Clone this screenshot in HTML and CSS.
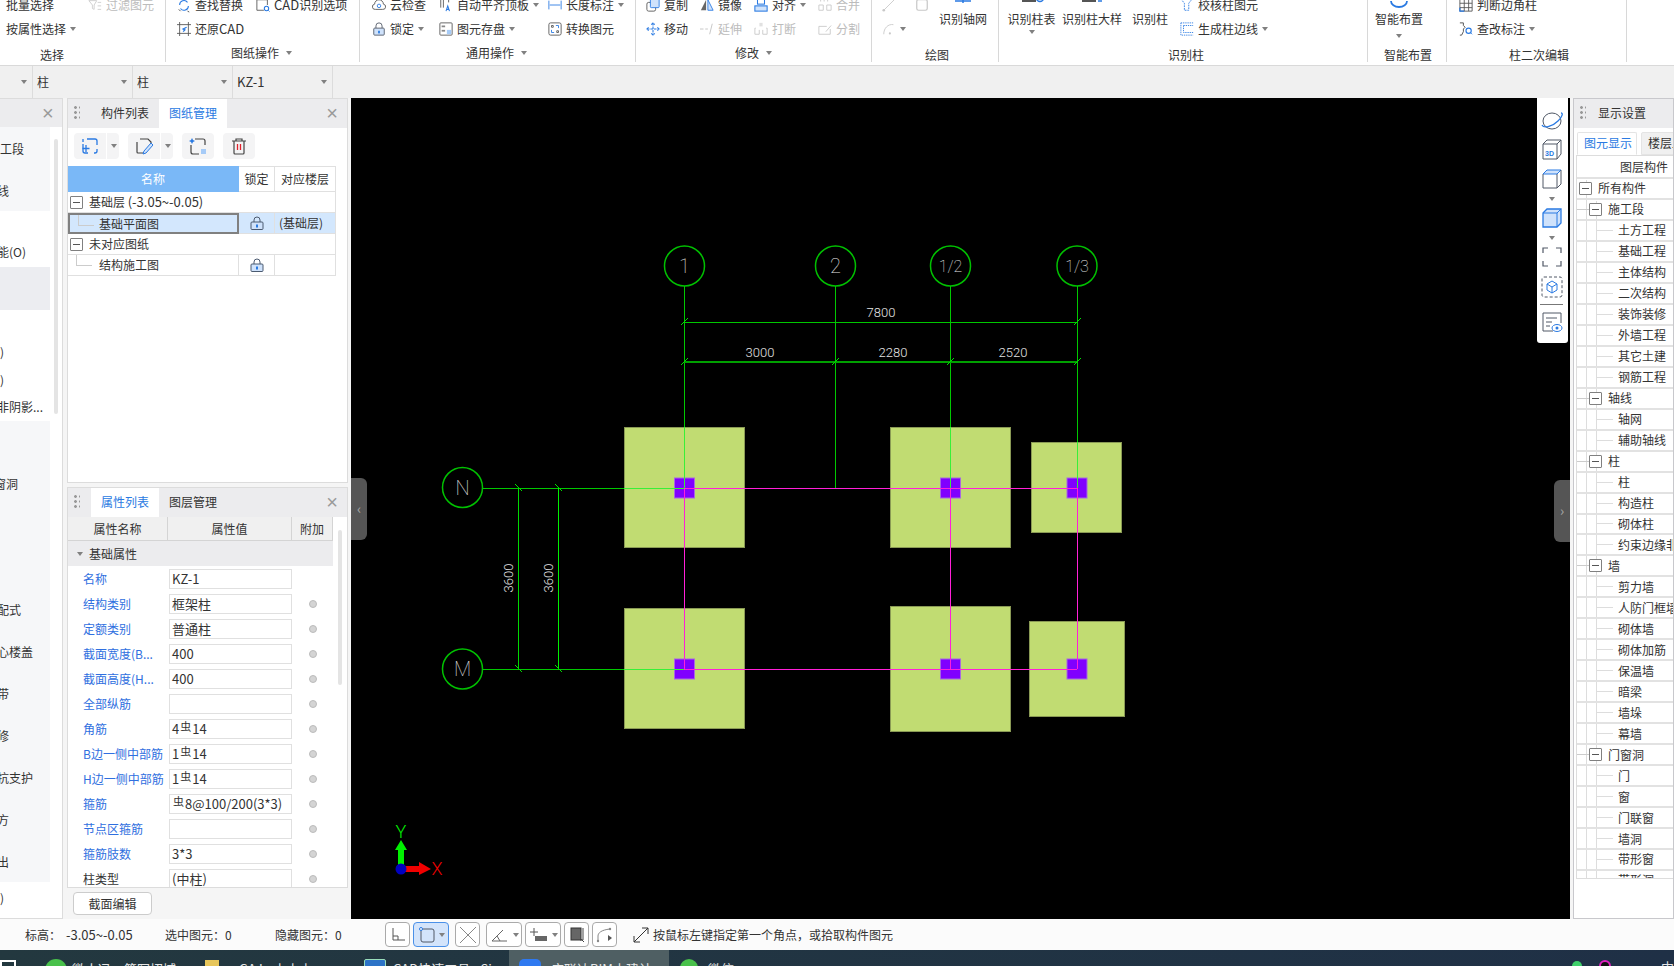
FILE: index.html
```html
<!DOCTYPE html>
<html lang="zh">
<head>
<meta charset="utf-8">
<title>GTJ</title>
<link rel="stylesheet" href="styles.css">
</head>
<body>
<svg class="defs" width="0" height="0">
  <symbol id="i-batch" viewBox="0 0 16 16"><path d="M8 3v10M4 8h8" fill="none" stroke="#2a7ae2" stroke-width="1.3"/></symbol>
  <symbol id="i-filter" viewBox="0 0 16 16"><path d="M1 3h9L7 8v5L5 12V8zM11 5h4M11 9h4M11 13h4" fill="none" stroke="#ccc"/></symbol>
  <symbol id="i-find" viewBox="0 0 16 16"><path d="M3 8a5 5 0 0 1 9-3M13 9a5 5 0 0 1-9 3" fill="none" stroke="#2a7ae2" stroke-width="1.2"/><path d="M12 15l2 1M2 13l2 2" stroke="#444"/></symbol>
  <symbol id="i-cadopt" viewBox="0 0 16 16"><path d="M1 2h12v6M1 2v12h8" fill="none" stroke="#555"/><circle cx="12" cy="12" r="2.5" fill="none" stroke="#2a7ae2" stroke-width="1.2"/><path d="M14 14l1.5 1.5" stroke="#2a7ae2"/></symbol>
  <symbol id="i-restore" viewBox="0 0 16 16"><path d="M0 3h16M0 13h16M3 0v16M13 0v16" stroke="#555" fill="none"/><path d="M11 6L7 8l2 1-2 2" stroke="#2a7ae2" stroke-width="1.5" fill="none"/></symbol>
  <symbol id="i-cloud" viewBox="0 0 16 16"><path d="M4 13a3 3 0 0 1-1-6 5 5 0 0 1 10 0 3 3 0 0 1-1 6z" fill="none" stroke="#555"/><circle cx="8" cy="9" r="2" fill="none" stroke="#2a7ae2"/></symbol>
  <symbol id="i-lock" viewBox="0 0 16 16"><path d="M4.500 7V4.500a3.500 3.500 0 0 1 7 0V7" fill="none" stroke="#505866"/><rect x="2" y="7" width="12" height="8" rx="1" fill="#cfe2fb" stroke="#505866"/><rect x="7" y="10" width="2" height="3" fill="#2a7ae2"/></symbol>
  <symbol id="i-autoalign" viewBox="0 0 16 16"><path d="M2 1v10M5 1v10M11 1v4" stroke="#555" fill="none"/><path d="M8 15l2-6 2 6M9 13h2" stroke="#2a7ae2" fill="none" stroke-width="1.2"/></symbol>
  <symbol id="i-save" viewBox="0 0 16 16"><rect x="1" y="1" width="14" height="14" rx="1" fill="none" stroke="#555"/><rect x="3" y="4" width="4" height="2" fill="#888"/><rect x="3" y="9" width="4" height="2" fill="#888"/><rect x="9" y="9" width="5" height="5" fill="#a6cbf7"/></symbol>
  <symbol id="i-length" viewBox="0 0 16 16"><path d="M1 3v10M15 3v10M2 8h12" stroke="#2a7ae2" fill="none"/></symbol>
  <symbol id="i-convert" viewBox="0 0 16 16"><rect x="1" y="1" width="14" height="14" rx="2" fill="none" stroke="#555"/><path d="M9 4h3v3M4 9v3h3" stroke="#2a7ae2" fill="none"/><path d="M4 4h2v2H4zM10 10h2v2h-2z" stroke="#555" fill="none"/></symbol>
  <symbol id="i-copy" viewBox="0 0 16 16"><rect x="1" y="5" width="10" height="10" rx="2" fill="#fff" stroke="#555"/><rect x="5" y="1" width="10" height="10" rx="1" fill="#cfe2fb" stroke="#2a7ae2"/></symbol>
  <symbol id="i-mirror" viewBox="0 0 16 16"><path d="M7 2L1 14h6z" fill="#666"/><path d="M9 2l6 12H9z" fill="#cfe2fb" stroke="#2a7ae2"/></symbol>
  <symbol id="i-align" viewBox="0 0 16 16"><rect x="4" y="1" width="8" height="6" fill="#fff" stroke="#2a7ae2" stroke-width="1.2"/><rect x="1" y="9" width="14" height="6" fill="#cfe2fb" stroke="#2a7ae2" stroke-width="1.2"/></symbol>
  <symbol id="i-merge" viewBox="0 0 16 16"><path d="M3 1v3M7 1v3M11 1v3M1 8h5v6H1zM10 8h5v6h-5z" fill="none" stroke="#c8c8c8"/></symbol>
  <symbol id="i-move" viewBox="0 0 16 16"><path d="M8 1v14M1 8h14M6 3l2-2 2 2M6 13l2 2 2-2M3 6L1 8l2 2M13 6l2 2-2 2" fill="none" stroke="#2a7ae2" stroke-width="1.2" stroke-dasharray="3 1"/></symbol>
  <symbol id="i-extend" viewBox="0 0 16 16"><path d="M0 8h4M6 8h3M14 2l-3 12" fill="none" stroke="#c0c0c0"/></symbol>
  <symbol id="i-break" viewBox="0 0 16 16"><path d="M7 1v4M2 7H1v7h5V9M10 9v5h5V7h-1M9 1v4" fill="none" stroke="#c8c8c8"/></symbol>
  <symbol id="i-split" viewBox="0 0 16 16"><path d="M1 5h9M1 5v9h13V8M9 11l6-7" fill="none" stroke="#c8c8c8"/></symbol>
  <symbol id="i-line" viewBox="0 0 16 16"><path d="M2 14L14 2" stroke="#c8c8c8"/><circle cx="2" cy="14" r="1.500" fill="#c8c8c8"/></symbol>
  <symbol id="i-rect" viewBox="0 0 16 16"><rect x="2" y="2" width="12" height="12" rx="2" fill="none" stroke="#c8c8c8" stroke-width="1.4"/></symbol>
  <symbol id="i-arc" viewBox="0 0 16 16"><path d="M2 14C2 7 7 2 13 3" fill="none" stroke="#c8c8c8"/><circle cx="9" cy="13" r="1.200" fill="#c8c8c8"/></symbol>
  <symbol id="i-verify" viewBox="0 0 16 16"><path d="M1 1h13l-4 5v8H5V6z" fill="none" stroke="#2a7ae2" stroke-dasharray="2 1"/></symbol>
  <symbol id="i-edge" viewBox="0 0 16 16"><path d="M1 1h14M1 1v14h14M4 4h11M4 4v8h11" fill="none" stroke="#2a7ae2" stroke-dasharray="1.500 1"/></symbol>
  <symbol id="i-judge" viewBox="0 0 16 16"><path d="M1 1h14v14H1zM1 6h14M1 11h14M6 1v14M11 1v14" fill="none" stroke="#555"/><path d="M1 11v4h5" fill="none" stroke="#2a7ae2" stroke-width="1.4"/></symbol>
  <symbol id="i-mark" viewBox="0 0 16 16"><path d="M1 1h4v3l2 2-2 2v3l-2 4H1" fill="none" stroke="#444"/><circle cx="11" cy="10" r="3" fill="none" stroke="#2a7ae2" stroke-width="1.3"/><path d="M13 12l2 2" stroke="#2a7ae2"/></symbol>
  <symbol id="i-padlock" viewBox="0 0 14 14"><path d="M4 6V4a3 3 0 0 1 6 0v2" fill="none" stroke="#4b5a70"/><rect x="1" y="6" width="12" height="7.500" rx="1" fill="#cfe2fb" stroke="#4b5a70"/><rect x="6" y="8.500" width="2" height="3" fill="#2a7ae2"/></symbol>
</svg>

<header class="ribbon">
  <section class="group g1">
    <div class="gbody b1">
      <div class="col c1a">
        <div class="it"><svg class="ic"><use href="#i-batch"/></svg>批量选择</div>
        <div class="it"><svg class="ic"><use href="#i-batch"/></svg>按属性选择<i class="dd"></i></div>
      </div>
      <div class="col">
        <div class="it off"><svg class="ic"><use href="#i-filter"/></svg>过滤图元</div>
      </div>
    </div>
    <div class="glabel gl1">选择</div>
  </section>
  <section class="group g2">
    <div class="gbody b2">
      <div class="col c2a">
        <div class="it"><svg class="ic"><use href="#i-find"/></svg>查找替换</div>
        <div class="it"><svg class="ic"><use href="#i-restore"/></svg><span>还原<span class="lat">CAD</span></span></div>
      </div>
      <div class="col">
        <div class="it"><svg class="ic"><use href="#i-cadopt"/></svg><span><span class="lat">CAD</span>识别选项</span></div>
      </div>
    </div>
    <div class="glabel up gl2">图纸操作<i class="dd dd-l"></i></div>
  </section>
  <section class="group g3">
    <div class="gbody b3">
      <div class="col c3a">
        <div class="it"><svg class="ic"><use href="#i-cloud"/></svg>云检查</div>
        <div class="it"><svg class="ic"><use href="#i-lock"/></svg>锁定<i class="dd"></i></div>
      </div>
      <div class="col c3b">
        <div class="it"><svg class="ic"><use href="#i-autoalign"/></svg>自动平齐顶板<i class="dd"></i></div>
        <div class="it"><svg class="ic"><use href="#i-save"/></svg>图元存盘<i class="dd"></i></div>
      </div>
      <div class="col">
        <div class="it"><svg class="ic"><use href="#i-length"/></svg>长度标注<i class="dd"></i></div>
        <div class="it"><svg class="ic"><use href="#i-convert"/></svg>转换图元</div>
      </div>
    </div>
    <div class="glabel up gl3">通用操作<i class="dd dd-l"></i></div>
  </section>
  <section class="group g4">
    <div class="gbody b4">
      <div class="col c4a">
        <div class="it"><svg class="ic"><use href="#i-copy"/></svg>复制</div>
        <div class="it"><svg class="ic"><use href="#i-move"/></svg>移动</div>
      </div>
      <div class="col c4a">
        <div class="it"><svg class="ic"><use href="#i-mirror"/></svg>镜像</div>
        <div class="it off"><svg class="ic"><use href="#i-extend"/></svg>延伸</div>
      </div>
      <div class="col c4b">
        <div class="it"><svg class="ic"><use href="#i-align"/></svg>对齐<i class="dd"></i></div>
        <div class="it off"><svg class="ic"><use href="#i-break"/></svg>打断</div>
      </div>
      <div class="col">
        <div class="it off"><svg class="ic"><use href="#i-merge"/></svg>合并</div>
        <div class="it off"><svg class="ic"><use href="#i-split"/></svg>分割</div>
      </div>
    </div>
    <div class="glabel up gl4">修改<i class="dd dd-l"></i></div>
  </section>
  <section class="group g5">
    <div class="gbody b5">
      <div class="col c5a">
        <div class="it"><svg class="ic"><use href="#i-line"/></svg></div>
        <div class="it"><svg class="ic"><use href="#i-arc"/></svg><i class="dd dd-near"></i></div>
      </div>
      <div class="col c5b">
        <div class="it"><svg class="ic"><use href="#i-rect"/></svg></div>
      </div>
      <div class="lg">
        <svg class="lg-ic" viewBox="0 0 24 16"><path d="M4 8h16M12 0v10" stroke="#2a7ae2" stroke-width="1.500"/></svg>
        <span>识别轴网</span>
      </div>
    </div>
    <div class="glabel gl5">绘图</div>
  </section>
  <section class="group g6">
    <div class="gbody b6">
      <div class="lg c6a">
        <svg class="lg-ic" viewBox="0 0 24 16"><rect x="2" y="0" width="14" height="9" fill="#555"/><circle cx="20" cy="5" r="3.500" fill="none" stroke="#2a7ae2" stroke-width="1.500"/></svg>
        <span>识别柱表</span><i class="dd dd-c"></i>
      </div>
      <div class="lg c6b">
        <svg class="lg-ic" viewBox="0 0 24 16"><rect x="2" y="0" width="14" height="9" fill="#555"/><path d="M18 8h4" stroke="#2a7ae2" stroke-width="1.500"/></svg>
        <span>识别柱大样</span>
      </div>
      <div class="lg c6c">
        <svg class="lg-ic" viewBox="0 0 24 16"><rect x="6" y="0" width="10" height="8" fill="#fff"/></svg>
        <span>识别柱</span>
      </div>
      <div class="col">
        <div class="it"><svg class="ic"><use href="#i-verify"/></svg>校核柱图元</div>
        <div class="it"><svg class="ic"><use href="#i-edge"/></svg>生成柱边线<i class="dd"></i></div>
      </div>
    </div>
    <div class="glabel gl6">识别柱</div>
  </section>
  <section class="group g7">
    <div class="gbody b7">
      <div class="lg">
        <svg class="lg-ic" viewBox="0 0 24 16"><path d="M4 8a8 6 0 0 0 16 0" fill="none" stroke="#2a7ae2" stroke-width="1.800"/></svg>
        <span>智能布置</span><i class="dd dd-c dd-low"></i>
      </div>
    </div>
    <div class="glabel gl7">智能布置</div>
  </section>
  <section class="group g8">
    <div class="gbody b8">
      <div class="col">
        <div class="it"><svg class="ic"><use href="#i-judge"/></svg>判断边角柱</div>
        <div class="it"><svg class="ic"><use href="#i-mark"/></svg>查改标注<i class="dd"></i></div>
      </div>
    </div>
    <div class="glabel gl8">柱二次编辑</div>
  </section>
</header>

<nav class="combos">
  <div class="combo first"><i class="dd"></i></div>
  <div class="combo">柱<i class="dd"></i></div>
  <div class="combo">柱<i class="dd"></i></div>
  <div class="combo"><span class="lat">KZ-1</span><i class="dd"></i></div>
</nav>

<main class="main">
  <aside class="nav-panel">
    <div class="phead close-only"><span class="x">×</span></div>
    <div class="nav-body">
      <div class="nav-list">
        <div class="nl tint h43">工段</div>
        <div class="nl tint h41 cut">线</div>
        <div class="nl h26"></div>
        <div class="nl h30 cut">能(O)</div>
        <div class="nl sel h43"></div>
        <div class="nl h28"></div>
        <div class="nl h28">)</div>
        <div class="nl h27">)</div>
        <div class="nl h28 cut">非阴影...</div>
        <div class="nl tint h42"></div>
        <div class="nl tint h42 cut2">窗洞</div>
        <div class="nl tint h42"></div>
        <div class="nl tint h42"></div>
        <div class="nl tint h42 cut">配式</div>
        <div class="nl tint h42 cut">心楼盖</div>
        <div class="nl tint h42 cut">带</div>
        <div class="nl tint h42 cut">修</div>
        <div class="nl tint h42 cut">抗支护</div>
        <div class="nl tint h42 cut">方</div>
        <div class="nl tint h41 cut">出</div>
        <div class="nl h32">)</div>
      </div>
      <div class="vscroll"></div>
    </div>
  </aside>

  <div class="mid">
    <section class="panel p-top">
      <div class="phead">
        <span class="grip"></span>
        <span class="tab">构件列表</span>
        <span class="tab on">图纸管理</span>
        <span class="x x-r">×</span>
      </div>
      <div class="dtools">
        <div class="tbtn split">
          <svg width="18" height="18" viewBox="0 0 18 18"><path d="M6 2h8a2 2 0 0 1 2 2v4M2 7v7a2 2 0 0 0 2 2h3M16 12v2a2 2 0 0 1-2 2h-1" fill="none" stroke="#2a7ae2" stroke-width="1.300"/><path d="M2 2v3M5 8v7M1.500 11.500h7" stroke="#2a7ae2" stroke-width="1.300"/></svg>
          <i class="sep"></i><i class="dd"></i>
        </div>
        <div class="tbtn split">
          <svg width="18" height="18" viewBox="0 0 18 18"><path d="M5 2h8l3 3v3M2 5v10a1 1 0 0 0 1 1h5" fill="none" stroke="#444" stroke-width="1.200"/><path d="M9 14l7-8 2 2-7 8-3 1z" fill="#cfe2fb" stroke="#2a7ae2"/></svg>
          <i class="sep"></i><i class="dd"></i>
        </div>
        <div class="tbtn">
          <svg width="18" height="18" viewBox="0 0 18 18"><path d="M6 2h8a2 2 0 0 1 2 2v4M2 8v7a2 2 0 0 0 2 2h6" fill="none" stroke="#444" stroke-width="1.200"/><path d="M3 1l1 2 2 1-2 1-1 2-1-2-2-1 2-1z" fill="#2a7ae2"/><rect x="12" y="12" width="5" height="5" fill="#a6cbf7"/></svg>
        </div>
        <div class="tbtn">
          <svg width="16" height="18" viewBox="0 0 16 18"><path d="M1 4h14M5 4V2h6v2M3 4v12a1 1 0 0 0 1 1h8a1 1 0 0 0 1-1V4" fill="none" stroke="#444" stroke-width="1.200"/><path d="M6.500 7v6M9.500 7v6" stroke="#e0212c" stroke-width="1.300"/></svg>
        </div>
      </div>
      <div class="dwg">
        <div class="dh dh-name">名称</div><div class="dh">锁定</div><div class="dh">对应楼层</div>
        <div class="dr span"><i class="box"></i><span>基础层 <span class="lat">(-3.05~-0.05)</span></span></div>
        <div class="dc active child">基础平面图</div><div class="dc picked"><svg class="pad"><use href="#i-padlock"/></svg></div><div class="dc picked left">(基础层)</div>
        <div class="dr span"><i class="box"></i>未对应图纸</div>
        <div class="dc child">结构施工图</div><div class="dc"><svg class="pad"><use href="#i-padlock"/></svg></div><div class="dc"></div>
      </div>
    </section>
    <section class="panel p-prop">
      <div class="phead">
        <span class="grip"></span>
        <span class="tab on">属性列表</span>
        <span class="tab">图层管理</span>
        <span class="x x-r">×</span>
      </div>
      <div class="prop-wrap">
        <div class="prop">
          <div class="ph">属性名称</div><div class="ph">属性值</div><div class="ph">附加</div>
          <div class="pg"><i class="dd"></i>基础属性</div>
          <div class="pl">名称</div><div class="pv">KZ-1</div><div class="pc"></div>
          <div class="pl">结构类别</div><div class="pv">框架柱</div><div class="pc"><i class="dot"></i></div>
          <div class="pl">定额类别</div><div class="pv">普通柱</div><div class="pc"><i class="dot"></i></div>
          <div class="pl">截面宽度(B...</div><div class="pv">400</div><div class="pc"><i class="dot"></i></div>
          <div class="pl">截面高度(H...</div><div class="pv">400</div><div class="pc"><i class="dot"></i></div>
          <div class="pl">全部纵筋</div><div class="pv"></div><div class="pc"><i class="dot"></i></div>
          <div class="pl">角筋</div><div class="pv">4<span class="rb">虫</span>14</div><div class="pc"><i class="dot"></i></div>
          <div class="pl">B边一侧中部筋</div><div class="pv">1<span class="rb">虫</span>14</div><div class="pc"><i class="dot"></i></div>
          <div class="pl">H边一侧中部筋</div><div class="pv">1<span class="rb">虫</span>14</div><div class="pc"><i class="dot"></i></div>
          <div class="pl">箍筋</div><div class="pv"><span class="rb">虫</span>8@100/200(3*3)</div><div class="pc"><i class="dot"></i></div>
          <div class="pl">节点区箍筋</div><div class="pv"></div><div class="pc"><i class="dot"></i></div>
          <div class="pl">箍筋肢数</div><div class="pv">3*3</div><div class="pc"><i class="dot"></i></div>
          <div class="pl dark">柱类型</div><div class="pv">(中柱)</div><div class="pc"><i class="dot"></i></div>
        </div>
        <div class="vscroll prop-scroll"></div>
      </div>
    </section>
    <div class="btn-row"><button class="btn">截面编辑</button></div>
  </div>

  <div class="canvas">
    <svg class="cad" width="1219" height="821" viewBox="351 98 1219 821">
      <g fill="#c1dc72" stroke="#8a9a55">
        <rect x="624.500" y="427.500" width="120" height="120"/>
        <rect x="624.500" y="608.500" width="120" height="120"/>
        <rect x="890.500" y="427.500" width="120" height="120"/>
        <rect x="890.500" y="606.500" width="120" height="125"/>
        <rect x="1031.500" y="442.500" width="90" height="90"/>
        <rect x="1029.500" y="621.500" width="95" height="95"/>
      </g>
      <g fill="#8000ff" stroke="#a868e0">
        <rect x="674.500" y="478" width="20" height="20"/>
        <rect x="940.500" y="478" width="20" height="20"/>
        <rect x="1067" y="478" width="20" height="20"/>
        <rect x="674.500" y="659" width="20" height="20"/>
        <rect x="940.500" y="659" width="20" height="20"/>
        <rect x="1067" y="659" width="20" height="20"/>
      </g>
      <g fill="none" stroke="#00c000" stroke-width="1.500">
        <circle cx="684.500" cy="266" r="20"/>
        <circle cx="835.500" cy="266" r="20"/>
        <circle cx="950.500" cy="266" r="20"/>
        <circle cx="1077" cy="266" r="20"/>
        <circle cx="462.500" cy="487.500" r="20"/>
        <circle cx="462.500" cy="669" r="20"/>
      </g>
      <g class="crisp" stroke="#00c800">
        <path d="M835.500 286V488"/>
        <path d="M684.500 286V427M950.500 286V427M1077 286V442"/>
        <path d="M684 322H1077"/>
        <path d="M684 362H1077" stroke-width="2" stroke="#00a000"/>
        <path d="M483 488H624M483 669H624"/>
        <path d="M518.500 488V669" stroke="#00d800"/>
        <path d="M558.500 488V669" stroke="#00f000"/>
      </g>
      <g stroke="#00e000">
        <path d="M681 325l7-7M1074 325l7-7M681 365l7-7M832 365l7-7M947 365l7-7M1074 365l7-7"/>
        <path d="M515 484l7 7M555 484l7 7M515 665l7 7M555 665l7 7"/>
      </g>
      <g class="crisp" stroke="#ff20d8">
        <path d="M684 488H1077M684.500 488V669M950.500 488V669M1077 488V669M684 669H1077"/>
      </g>
      <g class="crisp" stroke="#38f038">
        <path d="M684.500 427V488M950.500 427V488M1077 442V488M624 488H684M624 669H684"/>
      </g>
      <g class="cad-t">
        <text x="684.500" y="273" text-anchor="middle" class="t-big">1</text>
        <text x="835.500" y="273" text-anchor="middle" class="t-big">2</text>
        <text x="950.500" y="272" text-anchor="middle" class="t-mid">1/2</text>
        <text x="1077" y="272" text-anchor="middle" class="t-mid">1/3</text>
        <text x="462.500" y="495" text-anchor="middle" class="t-big">N</text>
        <text x="462.500" y="676" text-anchor="middle" class="t-big">M</text>
        <text x="881" y="317" text-anchor="middle">7800</text>
        <text x="760" y="357" text-anchor="middle">3000</text>
        <text x="893" y="357" text-anchor="middle">2280</text>
        <text x="1013" y="357" text-anchor="middle">2520</text>
        <text transform="translate(513 578) rotate(-90)" text-anchor="middle">3600</text>
        <text transform="translate(553 578) rotate(-90)" text-anchor="middle">3600</text>
      </g>
      <path d="M398 869V850H395L401 840L407 850H404V869z" fill="#00f000"/>
      <path d="M401 866H419V862L431 869L419 875V872H401z" fill="#f00000"/>
      <circle cx="401" cy="869" r="5.500" fill="#0000c0"/>
      <text x="401" y="838" text-anchor="middle" class="t-axis t-y">Y</text>
      <text x="437" y="875" text-anchor="middle" class="t-axis t-x">X</text>
    </svg>
    <div class="handle h-left">‹</div>
    <div class="handle h-right">›</div>
    <div class="float-bar">
      <svg width="22" height="22" viewBox="0 0 22 22"><ellipse cx="11" cy="11" rx="9" ry="8" fill="none" stroke="#505866"/><path d="M1 15C3 19 12 16 17 11s5-8 3-8" fill="none" stroke="#2a7ae2" stroke-width="1.300"/></svg>
      <svg width="22" height="24" viewBox="0 0 22 24"><path d="M2 6l4-4h14v14l-4 5H2zM2 6h14v15M16 6l4-4" fill="none" stroke="#505866"/><text x="4" y="18" class="t-3d">3D</text></svg>
      <svg width="22" height="22" viewBox="0 0 22 22"><path d="M2 6l4-4h14l-4 4z" fill="#cfe2fb" stroke="#2a7ae2"/><path d="M2 6v14h14V6M16 20l4-4V2" fill="none" stroke="#505866"/></svg>
      <i class="dd"></i>
      <svg width="22" height="22" viewBox="0 0 22 22"><path d="M2 6l4-4h14v14l-4 4H2z" fill="#cfe2fb" stroke="#2a7ae2" stroke-width="1.300"/><path d="M2 6h14v14M16 6l4-4" fill="none" stroke="#2a7ae2"/></svg>
      <i class="dd"></i>
      <svg width="22" height="22" viewBox="0 0 22 22"><path d="M2 7V2h5M15 2h5v5M20 15v5h-5M7 20H2v-5" fill="none" stroke="#505866" stroke-width="1.200"/></svg>
      <svg class="fb-d" width="22" height="22" viewBox="0 0 22 22"><rect x="1" y="1" width="20" height="20" rx="2" fill="none" stroke="#505866" stroke-dasharray="3 2"/><path d="M11 5l5 3v6l-5 3-5-3V8zM6 8l5 3 5-3M11 11v6" fill="none" stroke="#2a7ae2"/></svg>
      <i class="rule"></i>
      <svg width="22" height="22" viewBox="0 0 22 22"><path d="M20 12V2H2v18h10" fill="none" stroke="#505866"/><path d="M5 7h11M5 11h6M5 15h4" stroke="#505866"/><ellipse cx="16" cy="17" rx="5" ry="3.500" fill="#fff" stroke="#2a7ae2"/><circle cx="16" cy="17" r="1.500" fill="#2a7ae2"/></svg>
    </div>
  </div>

  <aside class="panel right">
    <div class="phead"><span class="grip"></span><span class="rtitle">显示设置</span></div>
    <div class="rtabs"><span class="rtab on">图元显示</span><span class="rtab">楼层显示</span></div>
    <div class="tree">
      <div class="tr thead">图层构件</div>
      <div class="tr l0"><i class="box"></i>所有构件</div>
      <div class="tr l1"><i class="box"></i>施工段</div>
      <div class="tr l2">土方工程</div>
      <div class="tr l2">基础工程</div>
      <div class="tr l2">主体结构</div>
      <div class="tr l2">二次结构</div>
      <div class="tr l2">装饰装修</div>
      <div class="tr l2">外墙工程</div>
      <div class="tr l2">其它土建</div>
      <div class="tr l2">钢筋工程</div>
      <div class="tr l1"><i class="box"></i>轴线</div>
      <div class="tr l2">轴网</div>
      <div class="tr l2">辅助轴线</div>
      <div class="tr l1"><i class="box"></i>柱</div>
      <div class="tr l2">柱</div>
      <div class="tr l2">构造柱</div>
      <div class="tr l2">砌体柱</div>
      <div class="tr l2">约束边缘非阴影区</div>
      <div class="tr l1"><i class="box"></i>墙</div>
      <div class="tr l2">剪力墙</div>
      <div class="tr l2">人防门框墙</div>
      <div class="tr l2">砌体墙</div>
      <div class="tr l2">砌体加筋</div>
      <div class="tr l2">保温墙</div>
      <div class="tr l2">暗梁</div>
      <div class="tr l2">墙垛</div>
      <div class="tr l2">幕墙</div>
      <div class="tr l1"><i class="box"></i>门窗洞</div>
      <div class="tr l2">门</div>
      <div class="tr l2">窗</div>
      <div class="tr l2">门联窗</div>
      <div class="tr l2">墙洞</div>
      <div class="tr l2">带形窗</div>
      <div class="tr l2">带形洞</div>
    </div>
  </aside>
</main>

<footer class="status">
  <span class="st st1">标高：</span><span class="st st2 lat">-3.05~-0.05</span><span class="st st3">选中图元：0</span><span class="st st4">隐藏图元：0</span>
  <div class="sbtns">
    <div class="sb"><svg width="16" height="16" viewBox="0 0 16 16"><path d="M3 1v12h12M3 9h5v4" fill="none" stroke="#555"/></svg></div>
    <div class="sb wide blue"><svg width="16" height="18" viewBox="0 0 16 18"><rect x="2" y="3" width="13" height="13" rx="2" fill="none" stroke="#505866"/><circle cx="2" cy="3" r="1.500" fill="#fff" stroke="#2a7ae2"/></svg><i class="dd"></i></div>
    <div class="sb sb-far"><svg width="20" height="20" viewBox="0 0 20 20"><path d="M2 2l16 16M18 2L2 18" stroke="#888"/></svg></div>
    <div class="sb wide sb-far"><svg width="18" height="16" viewBox="0 0 18 16"><path d="M1 14h15M1 14L12 3M6 9l3 5" fill="none" stroke="#666"/></svg><i class="dd"></i></div>
    <div class="sb wide"><svg width="18" height="16" viewBox="0 0 18 16"><path d="M4 1v8M0 5h8" stroke="#555"/><rect x="5" y="9" width="12" height="5" fill="#666"/></svg><i class="dd"></i></div>
    <div class="sb"><svg width="16" height="16" viewBox="0 0 16 16"><rect x="2" y="1" width="10" height="12" fill="#666" stroke="#333"/><path d="M14 1v12h-3M12 12l3 3" fill="none" stroke="#444"/></svg></div>
    <div class="sb"><svg width="18" height="16" viewBox="0 0 18 16"><path d="M2 14V9C2 6 5 3 14 2" fill="none" stroke="#888"/><circle cx="2" cy="14" r="1.200" fill="#888"/><circle cx="14" cy="2" r="1.200" fill="#888"/><path d="M12 8l4 3-4 3z" fill="#555"/></svg></div>
  </div>
  <svg class="hint-ic" width="16" height="16" viewBox="0 0 16 16"><path d="M1 15L15 1M9 1h6v6M1 9v6h6" fill="none" stroke="#333"/></svg>
  <span class="hint">按鼠标左键指定第一个角点，或拾取构件图元</span>
</footer>

<footer class="taskbar">
  <i class="win"></i>
  <i class="tk-ic green t-a"></i><span class="tk t-atext">微人冯·简写招域</span>
  <i class="tk-folder"></i><span class="tk t-btext">GAJ...山木小</span>
  <i class="tk-ic steel"></i><span class="tk t-ctext">CAD快速工具 - Si</span>
  <div class="tk-active"><i class="tk-ic azure"></i><span class="tk">广联达BIM土建计</span></div>
  <i class="tk-ic green t-d"></i><span class="tk t-dtext">微信</span>
  <div class="tray"><i class="tr-g"></i><i class="tr-k"></i><span class="tk tk-cn">中</span></div>
</footer>
</body>
</html>
```
FILE: styles.css
```css
* { box-sizing: border-box; }
html, body { margin: 0; padding: 0; }
body {
  width: 1674px;
  height: 966px;
  overflow: hidden;
  background: #f5f5f5;
  color: #333;
  font: 12px/20px "Noto Sans CJK SC", "Noto Sans", sans-serif;
  display: flex;
  flex-direction: column;
}
i { font-style: normal; display: block; }
.defs { position: absolute; }
.lat { font-size: 13px; }

/* ribbon */
.ribbon { height: 66px; flex: none; display: flex; background: #fff; overflow: hidden; border-bottom: 1px solid #d9d9d9; }
.group { height: 62px; flex: none; border-right: 1px solid #d8d8d8; display: flex; flex-direction: column; }
.g1 { width: 166px; }
.g2 { width: 194px; }
.g3 { width: 276px; }
.g4 { width: 236px; }
.g5 { width: 127px; }
.g6 { width: 369px; }
.g7 { width: 79px; }
.g8 { width: 180px; }
.gbody { height: 51px; margin-top: -7px; display: flex; flex: none; white-space: nowrap; }
.glabel { height: 20px; padding-top: 2px; line-height: 18px; display: flex; align-items: center; }
.glabel.up { padding-top: 0; height: 18px; }
.b1 { margin-left: -12px; }
.b2 { padding-left: 11px; }
.b3 { padding-left: 12px; }
.b4 { padding-left: 10px; }
.b5 { padding-left: 10px; }
.b6 { padding-left: 8px; }
.b7 { padding-left: 7px; }
.b8 { padding-left: 12px; }
.gl1 { padding-left: 40px; }
.gl2 { padding-left: 65px; }
.gl3 { padding-left: 106px; }
.gl4 { padding-left: 99px; }
.gl5 { padding-left: 53px; }
.gl6 { padding-left: 169px; }
.gl7 { padding-left: 16px; }
.gl8 { padding-left: 62px; }
.c1a { width: 100px; }
.c2a { width: 79px; }
.c3a { width: 67px; }
.c3b { width: 109px; }
.c4a { width: 54px; }
.c4b { width: 64px; }
.c5a { width: 33px; }
.c5b { width: 24px; }
.c6a { width: 49px; margin-right: 6px; }
.c6b { width: 60px; margin-right: 10px; }
.c6c { width: 36px; margin-right: 12px; }
.col { display: flex; flex-direction: column; }
.it { height: 24px; display: flex; align-items: center; }
.ic { width: 14px; height: 16px; margin-right: 4px; flex: none; }
.off { color: #bcbcbc; }
.dd { width: 0; height: 0; margin-left: 4px; flex: none; border-left: 3px solid transparent; border-right: 3px solid transparent; border-top: 4px solid #808080; }
.dd-l { margin-left: 7px; }
.dd-near { margin-left: 0; }
.lg { display: flex; flex-direction: column; align-items: center; }
.lg-ic { width: 24px; height: 16px; flex: none; }
.dd-c { margin: 1px 0 0; }
.dd-low { margin-top: 5px; }

/* combo strip */
.combos { height: 32px; flex: none; display: flex; background: #f0f0f0; }
.combo { width: 100px; height: 32px; padding-left: 4px; display: flex; align-items: center; position: relative; border-right: 1px solid #dcdcdc; justify-content: space-between; padding-right: 5px; }
.combo.first { width: 33px; justify-content: flex-end; }

/* main */
.main { height: 821px; flex: none; display: flex; }
.phead { height: 29px; flex: none; background: #ececee; display: flex; align-items: stretch; position: relative; }
.x { color: #9a9a9a; font-size: 20px; line-height: 29px; font-family: "Liberation Sans", sans-serif; }
.close-only .x { margin-left: 42px; }
.x-r { margin-left: auto; margin-right: 9px; }
.nav-panel { width: 63px; flex: none; background: #fff; border-right: 1px solid #dcdcdc; border-bottom: 1px solid #dcdcdc; border-top: 1px solid #dcdcdc; display: flex; flex-direction: column; overflow: hidden; height: 821px; }
.close-only { height: 28px; }
.nav-body { display: flex; flex: 1; min-height: 0; }
.nav-list { width: 50px; flex: none; }
.nl { white-space: nowrap; display: flex; align-items: center; overflow: hidden; }
.cut { text-indent: -3px; }
.cut2 { text-indent: -6px; }
.tint { background: #f6f7f9; }
.sel { background: #ecedf1; }
.h26 { height: 26px; }
.h27 { height: 27px; }
.h28 { height: 28px; }
.h30 { height: 30px; }
.h32 { height: 32px; }
.h41 { height: 41px; }
.h42 { height: 42px; }
.h43 { height: 43px; }
.vscroll { width: 4px; margin: 12px 0 0 4px; height: 275px; background: #e4e4e4; border-radius: 2px; }

.mid { width: 281px; flex: none; margin-left: 4px; display: flex; flex-direction: column; }
.panel { background: #fff; border: 1px solid #dcdcdc; display: flex; flex-direction: column; overflow: hidden; }
.p-top { height: 385px; }
.p-prop { height: 401px; margin-top: 4px; }
.grip { width: 7px; height: 16px; margin: 6px 11px 0 5px; flex: none; background-image: radial-gradient(circle, #999 1.300px, transparent 1.500px); background-size: 5px 5px; }
.tab { width: 68px; text-align: center; line-height: 28px; flex: none; }
.tab.on { background: #fff; color: #2a7ae2; }
.dtools { height: 38px; flex: none; display: flex; align-items: flex-start; padding: 5px 0 0 6px; gap: 9px; }
.tbtn { width: 32px; height: 26px; background: #f4f4f5; border-radius: 4px; display: flex; align-items: center; justify-content: center; flex: none; }
.tbtn.split { width: 45px; justify-content: flex-start; padding-left: 7px; margin-right: 0; }
.tbtn .sep { width: 1px; height: 26px; background: #fff; margin-left: 7px; }
.tbtn .dd { margin-left: 4px; }
.dwg { display: grid; grid-template-columns: 171px 36px 61px; grid-template-rows: 26px; grid-auto-rows: 21px; width: 268px; }
.dh { text-align: center; line-height: 24px; border-right: 1px solid #e0e0e0; border-bottom: 1px solid #e0e0e0; border-top: 1px solid #e0e0e0; }
.dh-name { background: #7ab8f7; color: #fff; border-color: #7ab8f7; }
.dr { grid-column: 1 / -1; display: flex; align-items: center; padding-left: 2px; border-bottom: 1px solid #e0e0e0; border-right: 1px solid #e0e0e0; }
.box { width: 13px; height: 13px; flex: none; border: 1px solid #808080; border-radius: 1px; background: linear-gradient(#555, #555) center / 7px 1px no-repeat #fff; margin-right: 6px; }
.dc { display: flex; align-items: center; justify-content: center; border-right: 1px solid #e0e0e0; border-bottom: 1px solid #e0e0e0; }
.child { justify-content: flex-start; padding-left: 31px; background: linear-gradient(#ccc, #ccc) 8px 10px / 16px 1px no-repeat, linear-gradient(#ccc, #ccc) 8px 0 / 1px 11px no-repeat; }
.active { background-color: #d3e7fd; border: 2px solid #808080; padding-left: 29px; }
.picked { background: #d3e7fd; }
.left { justify-content: flex-start; padding-left: 4px; }
.pad { width: 14px; height: 14px; }

.prop-wrap { display: flex; flex: 1; min-height: 0; }
.prop { width: 265px; flex: none; display: grid; grid-template-columns: 100px 124px 41px; grid-template-rows: 24px 25px; grid-auto-rows: 25px; }
.ph { text-align: center; line-height: 24px; background: #f0f0f0; border-right: 1px solid #d4d4d4; border-bottom: 1px solid #d4d4d4; }
.pg { grid-column: 1 / -1; background: #ececee; display: flex; align-items: center; }
.pg .dd { margin: 0 6px 0 9px; }
.pl { color: #2f6fe0; padding: 1px 0 0 15px; line-height: 24px; white-space: nowrap; }
.pl.dark { color: #333; }
.pv { margin: 3px 0 2px 1px; border: 1px solid #e0e0e0; padding-left: 2px; font-size: 13px; line-height: 18px; white-space: nowrap; overflow: hidden; }
.pc { display: flex; align-items: center; justify-content: center; }
.dot { width: 8px; height: 8px; border-radius: 50%; background: #d4d4d4; border: 1px solid #bbb; }
.rb { font-size: 11px; position: relative; top: -3px; margin: 0 1px; }
.prop-scroll { margin: 13px 0 0 5px; height: 155px; }
.btn-row { height: 30px; flex: none; padding: 4px 0 0 6px; }
.btn { width: 79px; height: 23px; padding: 0; font: inherit; line-height: 20px; color: #333; background: #fff; border: 1px solid #ccc; border-radius: 4px; }

/* canvas */
.canvas { width: 1219px; height: 821px; flex: none; margin-left: 3px; background: #000; position: relative; overflow: hidden; }
.cad { display: block; }
.crisp path { shape-rendering: crispEdges; }
.cad-t text { fill: #e4e4e4; font: 300 13px Roboto, "Liberation Sans", sans-serif; }
.cad-t .t-big { font-size: 20px; font-weight: 100; }
.cad-t .t-mid { font-size: 16px; font-weight: 100; }
.t-axis { font: 300 18px Roboto, sans-serif; }
.t-y { fill: #00f000; }
.t-x { fill: #f00000; }
.handle { position: absolute; width: 16px; height: 62px; background: #555; color: #aaa; font-size: 14px; line-height: 60px; text-align: center; }
.h-left { left: 0; top: 380px; border-radius: 0 6px 6px 0; }
.h-right { right: 0; top: 382px; border-radius: 6px 0 0 6px; }
.float-bar { position: absolute; left: 1186px; top: 0; width: 31px; height: 245px; background: #fff; border-radius: 0 0 3px 3px; display: flex; flex-direction: column; align-items: center; padding: 12px 2px 0 0; }
.float-bar svg { flex: none; }
.float-bar svg + svg { margin-top: 6px; }
.float-bar .dd { margin: 7px 0 5px; }
.float-bar .dd + svg { margin-top: 1px; }
.float-bar .fb-d { margin-top: 8px; }
.rule { width: 23px; height: 1px; background: #777; margin: 6px 0; flex: none; }
.t-3d { font: 700 7px "Liberation Sans", sans-serif; fill: #2a7ae2; }

.right { width: 101px; height: 821px; flex: none; margin-left: 3px; border-color: #c8c8cc; }
.rtitle { line-height: 28px; margin-left: 1px; }
.rtabs { height: 27px; flex: none; display: flex; padding: 4px 0 0 3px; gap: 4px; }
.rtab { width: 60px; height: 23px; flex: none; padding-left: 6px; line-height: 20px; white-space: nowrap; background: #f0f0f0; border-radius: 2px 2px 0 0; border: 1px solid #e4e4e4; overflow: hidden; }
.rtab.on { background: #fff; color: #2a7ae2; border-bottom-color: #fff; }
.tree { margin-left: 2px; height: 724px; overflow: hidden; border-left: 1px solid #ddd; border-top: 1px solid #ddd; border-bottom: 1px solid #ddd; width: 120px; background: linear-gradient(#ddd, #ddd) 9px 24px / 1px 100% no-repeat, linear-gradient(#ddd, #ddd) 19px 45px / 1px 100% no-repeat; }
.tr { height: 20.97px; line-height: 20px; display: flex; align-items: center; border-bottom: 2px solid #e2e2e2; white-space: nowrap; }
.thead { height: 23px; padding-left: 43px; }
.l0 { padding-left: 2px; }
.l1 { padding-left: 12px; background: linear-gradient(#ccc, #ccc) 0 50% / 12px 1px no-repeat; }
.l0 .box { margin-right: 6px; }
.l1 .box { margin-right: 6px; }
.l2 { padding-left: 41px; background: linear-gradient(#ddd, #ddd) 20px 50% / 16px 1px no-repeat; }

/* status */
.status { height: 31px; flex: none; background: #fbfbfb; display: flex; align-items: center; white-space: nowrap; }
.st { flex: none; }
.st1 { margin-left: 25px; width: 41px; }
.st2 { width: 99px; }
.st3 { width: 110px; }
.st4 { width: 110px; }
.sbtns { display: flex; gap: 3px; margin-left: 0; }
.sb { width: 25px; height: 25px; flex: none; background: #fff; border: 1px solid #aaa; border-radius: 4px; display: flex; align-items: center; justify-content: center; }
.sb.wide { width: 36px; padding-left: 1px; }
.sb.blue { background: #d3e4fb; border-color: #4a90e8; }
.sb-far { margin-left: 3px; }
.hint-ic { margin: 0 4px 0 16px; flex: none; }
.hint { color: #333; flex: none; }

/* taskbar */
.taskbar { height: 16px; flex: none; overflow: hidden; display: flex; background: linear-gradient(90deg, #23383f, #1f3046); color: #fff; white-space: nowrap; }
.win { width: 16px; height: 30px; margin-top: 10px; border: 2px solid #fff; flex: none; }
.tk { line-height: 20px; font-size: 13px; margin-top: 9px; color: #e8e8e8; }
.tk-ic { width: 22px; height: 22px; border-radius: 50%; margin-top: 9px; flex: none; }
.green { background: #49c14b; }
.steel { background: #2c73c7; border-radius: 2px; margin-left: 37px; border: 1px solid #9db; }
.azure { background: #2f79f0; border-radius: 5px; }
.t-a { margin-left: 29px; }
.t-atext { margin-left: 5px; width: 133px; }
.tk-folder { width: 14px; height: 20px; margin-top: 10px; background: #e7c65b; flex: none; }
.t-btext { margin-left: 20px; width: 88px; }
.t-ctext { margin-left: 7px; width: 116px; }
.tk-active { width: 160px; flex: none; background: #4f5f63; display: flex; padding-left: 10px; gap: 10px; }
.t-d { width: 18px; height: 18px; margin-left: 11px; }
.t-dtext { margin-left: 10px; }
.tray { margin-left: auto; display: flex; padding-right: 0; }
.tr-g { width: 10px; height: 10px; border-radius: 50%; background: #3fd06a; margin: 11px 17px 0 0; }
.tr-k { width: 12px; height: 12px; border-radius: 50%; background: #111; border: 2px solid #e020c0; margin: 10px 50px 0 0; }
.tk-cn { margin-top: 7px; }
```
